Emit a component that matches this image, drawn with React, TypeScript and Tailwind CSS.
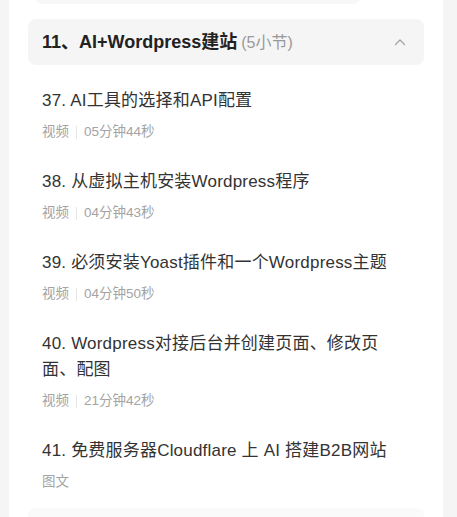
const lessons = [
  { no: 37, title: "AI工具的选择和API配置", kind: "视频", time: "05分钟44秒" },
  { no: 38, title: "从虚拟主机安装Wordpress程序", kind: "视频", time: "04分钟43秒" },
  { no: 39, title: "必须安装Yoast插件和一个Wordpress主题", kind: "视频", time: "04分钟50秒" },
  { no: 40, title: "Wordpress对接后台并创建页面、修改页面、配图", kind: "视频", time: "21分钟42秒" },
  { no: 41, title: "免费服务器Cloudflare 上 AI 搭建B2B网站", kind: "图文" },
];

function ChevronUp() {
  return (
    <svg width="12" height="8" viewBox="0 0 12 8" fill="none">
      <polyline points="1.5,6.5 6,2 10.5,6.5" stroke="#a0a0a0" strokeWidth="1.2" strokeLinecap="round" strokeLinejoin="round" />
    </svg>
  );
}

export default function App() {
  return (
    <div
      className="h-[517px] overflow-hidden bg-[#f5f5f5] pl-[9px] pr-[14px]"
      style={{ fontFamily: '"Liberation Sans", "Noto Sans CJK SC", sans-serif' }}
    >
      <div className="h-full overflow-hidden bg-white px-[19px]">
        {/* tail of the previous chapter */}
        <div className="-mt-[20px] ml-[5px] mr-[62px] h-[24px] rounded-b-[10px] bg-[#f7f7f7]" />

        {/* chapter header */}
        <div className="mt-[15px] flex h-[46px] items-center justify-between rounded-[8px] bg-[#f5f5f5] pl-[14px] pr-[18px]">
          <div className="flex items-baseline">
            <span className="text-[18px] font-bold text-[#222]">11、AI+Wordpress建站</span>
            <span className="ml-[4px] text-[16px] text-[#999]">(5小节)</span>
          </div>
          <ChevronUp />
        </div>

        {/* lessons */}
        <div className="pt-[10px]">
          {lessons.map((l) => (
            <div key={l.no} className="pt-[13px] pb-[14px] pl-[14px] pr-[24px]">
              <p className="text-[17px] leading-[26px] tracking-[0.2px] text-[#333]">
                {`${l.no}. ${l.title}`}
              </p>
              <div className="mt-[8px] flex h-[20px] items-center text-[13.5px] text-[#a3a3a3]">
                <span>{l.kind}</span>
                {l.time && (
                  <>
                    <span className="mx-[7px] h-[13px] w-px bg-[#e6e6e6]" />
                    <span>{l.time}</span>
                  </>
                )}
              </div>
            </div>
          ))}
        </div>

        {/* next chapter header peeking in */}
        <div className="mt-[2px] h-[30px] rounded-t-[8px] bg-[#fafafa]" />
      </div>
    </div>
  );
}
